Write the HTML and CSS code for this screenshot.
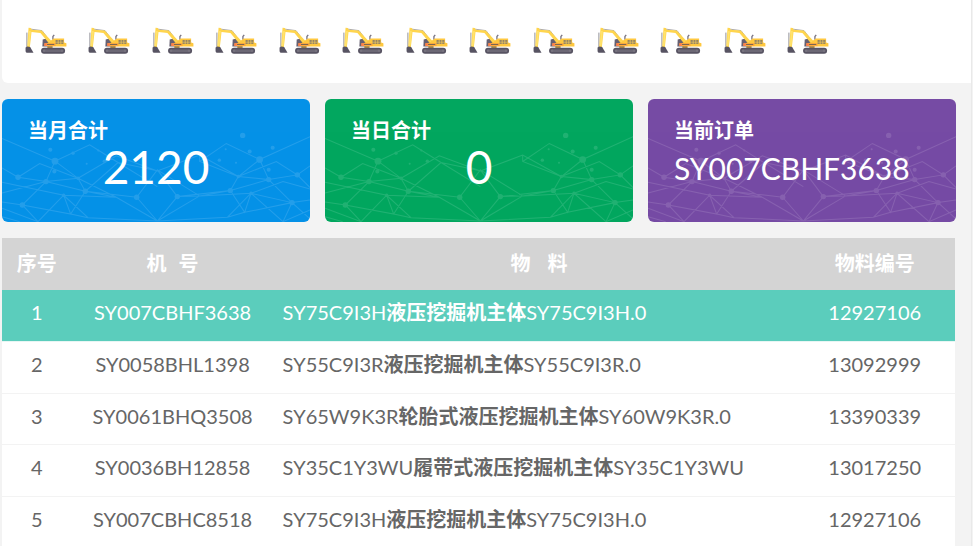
FILE: index.html
```html
<!DOCTYPE html>
<html lang="zh-CN">
<head>
<meta charset="utf-8">
<meta name="viewport" content="width=device-width, initial-scale=1">
<title>产量看板</title>
<link rel="stylesheet" href="styles.css">
</head>
<body>
<svg class="defs" aria-hidden="true">
  <symbol id="excavator" viewBox="0 0 124 82">
    <path d="M4 17v44" stroke="#8f8e96" stroke-width="3" fill="none"/>
    <path d="M12 6l38 5 19 25" stroke="#a9a8ac" stroke-width="3" fill="none"/>
    <path d="M52 38l9-2 10 9v14H51z" fill="#666071"/>
    <path d="M83 39V29l4-5" stroke="#777280" stroke-width="4" fill="none"/>
    <path d="M9 2l7 1 3 5 30 3 29 31-9 5-24-29-27-3-5 46H5z" fill="#ffd54d"/>
    <path d="M10 12l6 1-4 45H7z" fill="#ffe36f"/>
    <path d="M0 62l5-3 9 2 10 17H3q-3-2-3-5z" fill="#575362"/>
    <path d="M74 43l12-8h31v12l7 2v10H73l-9-9z" fill="#ffc83f"/>
    <path d="M57 49h34v9H57z" fill="#ffa83c"/>
    <path d="M57 50h7v7h-7z" fill="#ff7652"/>
    <path d="M65 53h22" stroke="#716253" stroke-width="3"/>
    <path d="M91 40h24v11H91z" fill="#807668"/>
    <path d="M99 39v13M107 39v13M90 46h26" stroke="#ffd35a" stroke-width="2"/>
    <path d="M66 58h16v7H66z" fill="#b08a43"/>
    <rect x="47" y="63" width="73" height="18" rx="9" fill="#575362"/>
    <path d="M58 72h51" stroke="#6c6875" stroke-width="8" stroke-linecap="round"/>
    <circle cx="56" cy="72" r="4" fill="#77737f"/><circle cx="111" cy="72" r="4" fill="#77737f"/>
  </symbol>
  <symbol id="network" viewBox="7 13 924 368" preserveAspectRatio="none">
    <g fill="none" stroke="#fff" stroke-width="3">
      <path d="M7 131L166 199 270 150 355 203 473 275M166 199L139 260 55 247 7 219M166 199L235 250 257 289M55 247L120 206 235 250 139 260 7 294M55 247L139 260 257 289 411 307 473 225 533 305 692 287 807 254 893 240 931 213M235 250L350 183 473 228 600 181 716 245M257 289L355 203 473 228M7 321L68 330 139 260M68 330L213 357 192 301 7 262M68 330L115 380 192 301 265 368M213 357L257 289M213 357L265 368 473 378M192 301L350 307 473 378 411 307M350 307L257 289M350 307L235 250M473 378L533 305 600 303 473 225M473 378L600 303 754 295 877 323 931 315M600 303L692 287 716 245 780 194 931 126M600 181L600 200 716 245 807 254 780 194 680 146 600 200M716 245L830 200 893 240 931 278M692 287L735 352 754 295M735 352L877 323 807 254M735 352L683 367 473 378M683 367L754 295 850 380 877 323 931 372M754 295L850 260 931 282M7 340L115 380M7 365L60 380M850 380L931 345"/>
    </g>
    <g fill="#fff">
      <circle cx="166" cy="199" r="10"/><circle cx="55" cy="247" r="8"/><circle cx="139" cy="260" r="8"/><circle cx="257" cy="289" r="8"/><circle cx="68" cy="330" r="8"/><circle cx="411" cy="307" r="8"/><circle cx="533" cy="305" r="8"/><circle cx="692" cy="287" r="8"/><circle cx="807" cy="254" r="8"/><circle cx="893" cy="240" r="8"/><circle cx="877" cy="323" r="8"/><circle cx="780" cy="194" r="10"/><circle cx="729" cy="122" r="8"/><circle cx="819" cy="159" r="6"/><circle cx="750" cy="170" r="6"/><circle cx="807" cy="225" r="6"/><circle cx="659" cy="196" r="5"/><circle cx="152" cy="165" r="6"/><circle cx="220" cy="175" r="5"/><circle cx="164" cy="230" r="6"/><circle cx="235" cy="250" r="5"/><circle cx="192" cy="301" r="5"/><circle cx="754" cy="295" r="5"/><circle cx="716" cy="245" r="5"/><circle cx="314" cy="199" r="5"/><circle cx="261" cy="207" r="3"/><circle cx="296" cy="167" r="3"/><circle cx="678" cy="163" r="3"/><circle cx="709" cy="204" r="3"/>
    </g>
  </symbol>
</svg>
<main class="board">
  <section class="fleet">
    <svg class="machine"><use href="#excavator"/></svg>
    <svg class="machine"><use href="#excavator"/></svg>
    <svg class="machine"><use href="#excavator"/></svg>
    <svg class="machine"><use href="#excavator"/></svg>
    <svg class="machine"><use href="#excavator"/></svg>
    <svg class="machine"><use href="#excavator"/></svg>
    <svg class="machine"><use href="#excavator"/></svg>
    <svg class="machine"><use href="#excavator"/></svg>
    <svg class="machine"><use href="#excavator"/></svg>
    <svg class="machine"><use href="#excavator"/></svg>
    <svg class="machine"><use href="#excavator"/></svg>
    <svg class="machine"><use href="#excavator"/></svg>
    <svg class="machine"><use href="#excavator"/></svg>
  </section>
  <section class="stats">
    <article class="card card-month">
      <svg class="pattern" aria-hidden="true"><use href="#network"/></svg>
      <h2 class="card-title">当月合计</h2>
      <p class="card-value">2120</p>
    </article>
    <article class="card card-day">
      <svg class="pattern" aria-hidden="true"><use href="#network"/></svg>
      <h2 class="card-title">当日合计</h2>
      <p class="card-value">0</p>
    </article>
    <article class="card card-order">
      <svg class="pattern" aria-hidden="true"><use href="#network"/></svg>
      <h2 class="card-title">当前订单</h2>
      <p class="card-value card-code">SY007CBHF3638</p>
    </article>
  </section>
  <table class="orders">
    <colgroup><col class="col-index"><col class="col-machine"><col class="col-material"><col class="col-number"></colgroup>
    <thead>
      <tr><th scope="col">序号</th><th scope="col"><span class="spread"><span>机</span><span>号</span></span></th><th scope="col"><span class="spread spread-wide"><span>物</span><span>料</span></span></th><th scope="col" class="number">物料编号</th></tr>
    </thead>
    <tbody>
      <tr class="current"><td>1</td><td>SY007CBHF3638</td><td class="material">SY75C9I3H<b>液压挖掘机主体</b>SY75C9I3H.0</td><td class="number">12927106</td></tr>
      <tr><td>2</td><td>SY0058BHL1398</td><td class="material">SY55C9I3R<b>液压挖掘机主体</b>SY55C9I3R.0</td><td class="number">13092999</td></tr>
      <tr><td>3</td><td>SY0061BHQ3508</td><td class="material">SY65W9K3R<b>轮胎式液压挖掘机主体</b>SY60W9K3R.0</td><td class="number">13390339</td></tr>
      <tr><td>4</td><td>SY0036BH12858</td><td class="material">SY35C1Y3WU<b>履带式液压挖掘机主体</b>SY35C1Y3WU</td><td class="number">13017250</td></tr>
      <tr><td>5</td><td>SY007CBHC8518</td><td class="material">SY75C9I3H<b>液压挖掘机主体</b>SY75C9I3H.0</td><td class="number">12927106</td></tr>
    </tbody>
  </table>
</main>
</body>
</html>
```
FILE: styles.css
```css
* { box-sizing: border-box; }
body {
  margin: 0;
  background: #f3f3f3;
  color: #666;
  font-family: Lato, "Noto Sans CJK SC", sans-serif;
  overflow: hidden;
}
.defs { position: absolute; width: 0; height: 0; }
.board {
  margin-right: 1px;
  padding-left: 2px;
  border-right: 1px solid #e9e9e9;
}
.fleet {
  display: grid;
  grid-template-columns: repeat(15, 1fr);
  justify-items: center;
  padding: 27px 4px 29px 12px;
  background: #fff;
  border-bottom-left-radius: 6px;
}
.machine { display: block; width: 42px; height: 27px; }
.stats {
  display: grid;
  grid-template-columns: repeat(3, 1fr);
  gap: 15px;
  padding: 16px 15px 16px 0;
}
.card {
  position: relative;
  height: 123px;
  padding: 17px 26px;
  border-radius: 6px;
  overflow: hidden;
  color: #fff;
}
.card-month { background: #0591e7; }
.card-day { background: #02a75f; }
.card-order { background: #764ba4; }
.pattern {
  position: absolute;
  inset: 0;
  width: 100%;
  height: 100%;
  opacity: 0.12;
}
.card-title, .card-value { position: relative; margin: 0; }
.card-title {
  font-size: 20px;
  line-height: 28px;
  font-weight: 700;
}
.card-value {
  font-size: 46px;
  line-height: 46px;
  text-align: center;
}
.card-code { font-size: 30px; line-height: 48px; text-align: left; }
.orders {
  width: calc(100% - 16px);
  border-collapse: collapse;
  table-layout: fixed;
  background: #fff;
  font-size: 20px;
  line-height: 28px;
}
.col-index { width: 7.3%; }
.col-machine { width: 21.2%; }
.col-material { width: 55.7%; }
.col-number { width: 15.8%; }
th, td { padding: 0; text-align: center; white-space: nowrap; }
th {
  height: 52px;
  padding-bottom: 2px;
  background: #d4d4d4;
  color: #fff;
}
td { height: 51px; border-bottom: 1px solid #f3f3f3; padding-bottom: 6px; }
tbody tr:nth-child(even) td { height: 52px; }
td b { font-weight: 700; }
.spread { display: inline-flex; gap: 12px; }
.spread-wide { gap: 17px; }
td.material { padding-left: 9px; text-align: left; }
.number { padding-right: 10px; }
.current td { background: #5bcdbc; color: #fff; border-bottom-color: #e8f6f4; }
```
